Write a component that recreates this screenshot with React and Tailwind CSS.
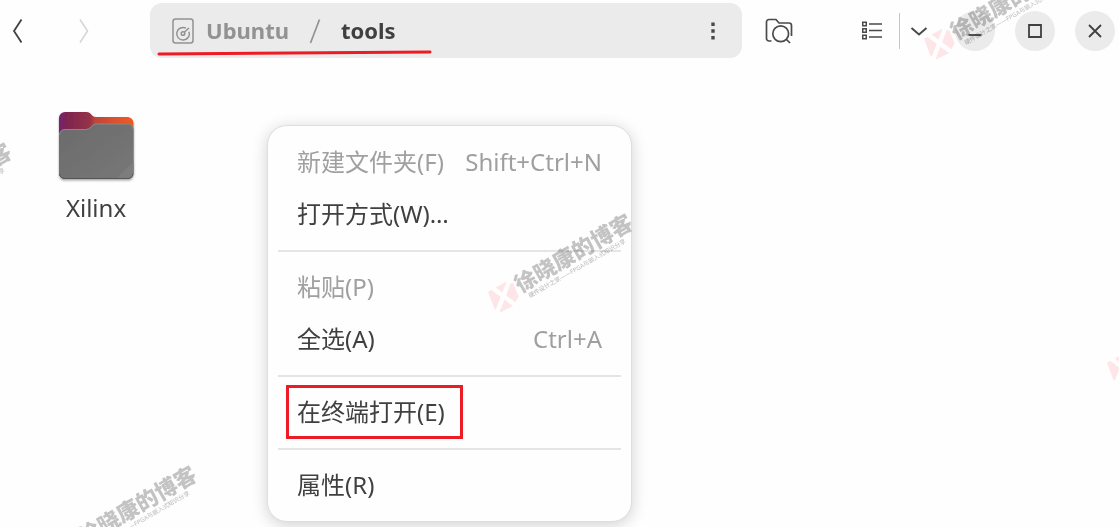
const uiFont = 'font-["Noto_Sans","Noto_Sans_CJK_SC",sans-serif]';

function BackIcon() {
  return (
    <svg width="12" height="26" viewBox="0 0 12 26" fill="none" stroke="currentColor" strokeWidth="1.800">
      <path d="M9.500 1.500 2 13l7.500 11.500" />
    </svg>
  );
}

function ForwardIcon() {
  return (
    <svg width="12" height="26" viewBox="0 0 12 26" fill="none" stroke="currentColor" strokeWidth="1.500">
      <path d="M2 1.500 9.500 13 2 24.500" />
    </svg>
  );
}

function DriveIcon() {
  return (
    <svg width="22" height="26" viewBox="0 0 22 26" fill="none" stroke="#929292" strokeWidth="1.500" className="shrink-0">
      <rect x="1" y="1" width="20" height="24" rx="2.500" />
      <path d="M14 10.200a6.300 6.300 0 1 0 3 3.500" />
      <circle cx="11" cy="15.500" r="1.800" />
      <path d="m12.300 14.200 4.700-4.200" />
    </svg>
  );
}

function FolderSearchIcon() {
  return (
    <svg width="28" height="26" viewBox="0 0 28 26" fill="none" stroke="#4a4a4a" strokeWidth="1.700">
      <path d="M6.500 23H4a2.500 2.500 0 0 1-2.500-2.500V4A2.500 2.500 0 0 1 4 1.500h7L14 5h10a2.500 2.500 0 0 1 2.500 2.500V18" />
      <circle cx="15.700" cy="15.700" r="7.900" />
      <path d="m21 21 4 4" />
    </svg>
  );
}

function ListIcon() {
  return (
    <svg width="22" height="20" viewBox="0 0 22 20" fill="none" stroke="#4a4a4a" strokeWidth="1.500">
      <path d="M1.750 1.250h3.500v3.500h-3.500zM1.750 7.750h3.500v3.500h-3.500zM1.750 14.250h3.500v3.500h-3.500z" />
      <path d="M8 3h13M8 9.500h13M8 16h13" />
    </svg>
  );
}

function ChevronIcon() {
  return (
    <svg width="18" height="12" viewBox="0 0 18 12" fill="none" stroke="#4a4a4a" strokeWidth="2">
      <path d="m1.500 3 7.500 6.500L16.500 3" />
    </svg>
  );
}

function FolderIcon() {
  return (
    <svg width="80" height="74" viewBox="0 0 80 74" aria-hidden="true">
      <defs>
        <linearGradient id="folder-back" x1="0" x2="1" y1="0" y2="0">
          <stop offset="0" stopColor="#77216f" />
          <stop offset="0.120" stopColor="#80254f" />
          <stop offset="0.420" stopColor="#963349" />
          <stop offset="0.480" stopColor="#bd4539" />
          <stop offset="0.700" stopColor="#d84f31" />
          <stop offset="1" stopColor="#f25a22" />
        </linearGradient>
        <linearGradient id="folder-front" x1="0" x2="1" y1="0" y2="1">
          <stop offset="0" stopColor="#6b6b6b" />
          <stop offset="1" stopColor="#777" />
        </linearGradient>
        <filter id="folder-shadow" x="-10%" y="-10%" width="120%" height="125%">
          <feDropShadow dx="0" dy="1.500" stdDeviation="1.300" floodOpacity="0.350" />
        </filter>
      </defs>
      <g filter="url(#folder-shadow)">
        <path d="M3 8a6 6 0 0 1 6-6h21.500c2.500 0 3.500 1 4.800 2.500 1.200 1.600 2.200 2.500 4.700 2.500h31.500a6 6 0 0 1 6 6v50a6 6 0 0 1-6 6H9a6 6 0 0 1-6-6z" fill="url(#folder-back)" />
        <path d="M3 25a6 6 0 0 1 6-6h20c2.500 0 4-.7 5.500-2.300C36.500 14.700 38 13.500 40.500 13.500h31a6 6 0 0 1 6 6V63a6 6 0 0 1-6 6H9a6 6 0 0 1-6-6z" fill="url(#folder-front)" />
        <path d="M60 69 77.500 51.500V63a6 6 0 0 1-6 6z" fill="#7d7d7d" />
        <path d="M3.500 25a5.500 5.500 0 0 1 5.500-5.500h20c2.500 0 4.300-.7 5.800-2.300C36.800 15.200 38 14 40.500 14h31a5.500 5.500 0 0 1 5.500 5.500" fill="none" stroke="#898989" strokeWidth="1" />
        <path d="M3.500 64A5.500 5.500 0 0 0 9 68.500h62.500A5.500 5.500 0 0 0 77 64" fill="none" stroke="#555" strokeWidth="1" />
      </g>
    </svg>
  );
}

function WindowButton({ label, children }) {
  return (
    <button type="button" aria-label={label} className="flex size-10 items-center justify-center rounded-full bg-[#ebebeb]">
      <svg width="16" height="16" viewBox="0 0 16 16" fill="none" stroke="#404040" strokeWidth="1.800">{children}</svg>
    </button>
  );
}

function Header() {
  return (
    <header className="flex items-center pt-[3px] pr-1">
      <nav aria-label="History" className="flex w-[150px] shrink-0 items-center pl-3">
        <button type="button" aria-label="Back" className="text-[#404040]"><BackIcon /></button>
        <button type="button" aria-label="Forward" disabled className="ml-[54px] text-[#d5d5d5]"><ForwardIcon /></button>
      </nav>
      <div className="relative flex h-[55px] min-w-0 flex-1 items-center rounded-xl bg-[#ebebeb] pl-[22px] text-[22px] font-bold">
        <DriveIcon />
        <a href="#ubuntu" className="ml-3 text-[#929292]">Ubuntu</a>
        <svg width="12" height="26" viewBox="0 0 12 26" className="ml-5 shrink-0" stroke="#929292" strokeWidth="1.700" aria-hidden="true"><path d="M10.500 1.500 1.500 25" /></svg>
        <a href="#tools" aria-current="page" className="ml-5 text-[#404040]">tools</a>
        <button type="button" aria-label="More options" className="ml-auto px-[27px]">
          <svg width="4" height="18" viewBox="0 0 4 18" fill="#4a4a4a"><path d="M.3.500h3.400v3.400H.3zM.3 7.300h3.400v3.400H.3zM.3 14.100h3.400v3.400H.3z" /></svg>
        </button>
        <svg width="276" height="6" viewBox="0 0 276 6" className="absolute bottom-0.5 left-[7px]" fill="none" stroke="#ed1c24" strokeWidth="3" strokeLinecap="round" aria-hidden="true">
          <path d="M2 4 273 2" />
        </svg>
      </div>
      <div className="flex shrink-0 items-center pl-[23px]">
        <button type="button" aria-label="Search" className="mr-[68px]"><FolderSearchIcon /></button>
        <button type="button" aria-label="List view"><ListIcon /></button>
        <span className="mr-2.5 ml-4 h-9 w-px bg-[#c8c8c8]" />
        <button type="button" aria-label="View options" className="mr-[27px]"><ChevronIcon /></button>
        <div className="flex gap-5">
          <WindowButton label="Minimize"><path d="M1.500 12h13" /></WindowButton>
          <WindowButton label="Maximize"><path d="M2 2h12v12H2z" /></WindowButton>
          <WindowButton label="Close"><path d="m2 2 12 12M14 2 2 14" /></WindowButton>
        </div>
      </div>
    </header>
  );
}

function MenuItem({ label, shortcut, disabled, marked }) {
  return (
    <button
      type="button"
      role="menuitem"
      disabled={disabled}
      className="relative flex h-[52px] w-full items-center justify-between px-[19px] text-left text-[#404040] disabled:text-[#a0a0a0]"
    >
      <span>{label}</span>
      {shortcut && <span className="text-[#9f9f9f]">{shortcut}</span>}
      {marked && <span className="absolute -inset-y-px left-2 w-[177px] border-3 border-[#ed1c24]" />}
    </button>
  );
}

function Separator() {
  return <div role="separator" className="mt-[10px] mb-[9px] h-0.5 bg-[#e5e5e5]" />;
}

function ContextMenu() {
  return (
    <div role="menu" className="absolute top-[125px] left-[267px] w-[365px] rounded-[20px] border border-[#dedede] bg-[#fefefe] p-2.5 text-2xl shadow-[0_3px_16px_rgba(0,0,0,0.18)]">
      <MenuItem label="新建文件夹(F)" shortcut="Shift+Ctrl+N" disabled />
      <MenuItem label="打开方式(W)…" />
      <Separator />
      <MenuItem label="粘贴(P)" disabled />
      <MenuItem label="全选(A)" shortcut="Ctrl+A" />
      <Separator />
      <MenuItem label="在终端打开(E)" marked />
      <Separator />
      <MenuItem label="属性(R)" />
    </div>
  );
}

function Watermark({ place }) {
  return (
    <div className={`absolute flex h-8 w-[164px] -rotate-30 items-center ${place}`}>
      <svg width="32" height="32" viewBox="0 0 32 32" className="shrink-0">
        <path d="M5 3.500 25 4l6 5-2 14-9 5.500L5 27.500 2 21z" fill="#ffe6e8" />
        <path d="m10 1 12.500 29M28.500 5 3 25.500" stroke="#fff" strokeWidth="4.500" />
      </svg>
      <div className="shrink-0 whitespace-nowrap text-[#c4c4c4]">
        <div className="text-[22px] leading-6 font-black">徐晓康的博客</div>
        <div className="pl-1.5 text-[6px] leading-2 font-medium">硬件设计之家——FPGA与嵌入式知识分享</div>
      </div>
    </div>
  );
}

export default function App() {
  return (
    <main className={`relative min-h-screen overflow-hidden bg-[#fefefe] ${uiFont}`}>
      <Header />
      <section aria-label="Files" className="px-[46px] pt-[52px]">
        <button type="button" className="flex w-[100px] flex-col items-center text-2xl text-[#404040]">
          <FolderIcon />
          <span className="mt-2">Xilinx</span>
        </button>
      </section>
      <ContextMenu />
      <div aria-hidden="true" className="pointer-events-none absolute inset-0 overflow-hidden mix-blend-multiply">
        <Watermark place="top-[248px] left-[479px]" />
        <Watermark place="top-[-5px] left-[915px]" />
        <Watermark place="top-[500px] left-[43px]" />
        <Watermark place="top-[177px] left-[-142px]" />
        <Watermark place="top-[319px] left-[1098px]" />
      </div>
    </main>
  );
}
